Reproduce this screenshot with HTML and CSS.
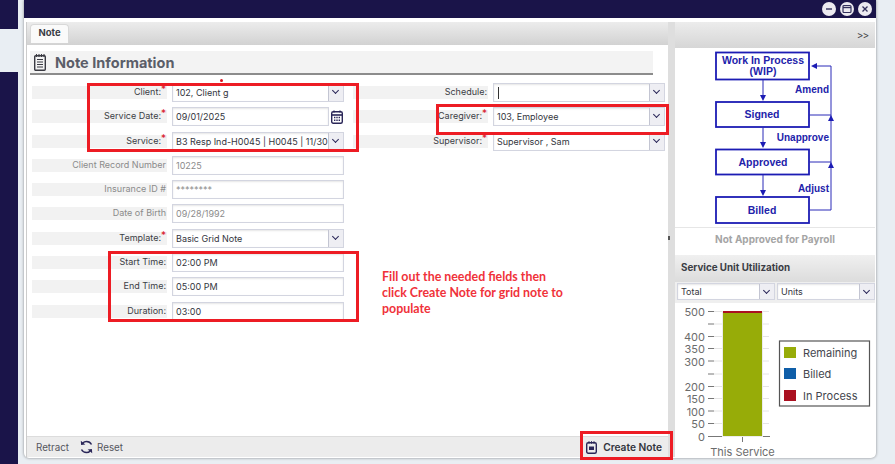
FILE: index.html
```html
<!DOCTYPE html>
<html lang="en">
<head>
    <meta charset="UTF-8">
    <title>Note Information</title>
    <link rel="stylesheet" href="styles.css">
</head>
<body>

<!-- Left nav strip behind the dialog -->
<div class="nav-strip">
    <div class="nav-dark nav-top"></div>
    <div class="nav-light"></div>
    <div class="nav-dark nav-rest"></div>
</div>

<div class="dialog">
    <div class="title-bar">
        <span class="win-btn"><svg width="10" height="10" viewBox="0 0 10 10"><path d="M2 5h6" stroke="#33305c" stroke-width="1.4"/></svg></span>
        <span class="win-btn"><svg width="10" height="10" viewBox="0 0 10 10"><rect x="1" y="1.5" width="8" height="7" rx="1" fill="none" stroke="#33305c" stroke-width="1.2"/><path d="M1 3.5h8" stroke="#33305c" stroke-width="1.4"/></svg></span>
        <span class="win-btn"><svg width="10" height="10" viewBox="0 0 10 10"><path d="M2.5 2.5l5 5M7.500 2.500l-5 5" stroke="#33305c" stroke-width="1.3"/></svg></span>
    </div>

    <div class="dialog-body">
        <div class="main-pane">
            <div class="tab-bar">
                <div class="tab">Note</div>
            </div>

            <div class="form-pane">
                <div class="section-head">
                    <svg class="section-icon" width="12" height="17" viewBox="0 0 12 17">
                        <rect x="0.7" y="1.700" width="10.600" height="14.600" rx="1" fill="none" stroke="#3a3a42" stroke-width="1.400"/>
                        <path d="M2.500 0v3M5 0v3M7.500 0v3M10 0v3M3 5.500h6M3 8h6M3 10.500h6M3 13h6" stroke="#3a3a42" stroke-width="1.100"/>
                    </svg>
                    <span class="section-title">Note Information</span>
                </div>
                <span class="stray-dot"></span>

                <div class="form-columns">
                    <div class="form-col">
                        <div class="form-row">
                            <div class="form-label">Client:<span class="req">*</span></div>
                            <div class="field select"><span class="value">102, Client g</span><span class="arrow"></span></div>
                        </div>
                        <div class="form-row">
                            <div class="form-label">Service Date:<span class="req">*</span></div>
                            <div class="date-wrap">
                                <div class="field"><span class="value">09/01/2025</span></div>
                                <svg class="cal-icon" width="12" height="14" viewBox="0 0 12 14">
                                    <rect x="0.700" y="1.700" width="10.600" height="11.600" rx="1.500" fill="none" stroke="#2a2658" stroke-width="1.400"/>
                                    <path d="M1 5h10" stroke="#2a2658" stroke-width="1.600"/>
                                    <path d="M3 0.500v2M9 0.500v2" stroke="#2a2658" stroke-width="1.300"/>
                                    <path d="M3 7.500h1.400M5.300 7.500h1.400M7.600 7.500h1.400M3 10.200h1.400M5.300 10.200h1.400M7.600 10.200h1.400" stroke="#2a2658" stroke-width="1.400"/>
                                </svg>
                            </div>
                        </div>
                        <div class="form-row">
                            <div class="form-label">Service:<span class="req">*</span></div>
                            <div class="field select"><span class="value">B3 Resp Ind-H0045 | H0045 | 11/30</span><span class="arrow"></span></div>
                        </div>
                        <div class="form-row muted">
                            <div class="form-label">Client Record Number</div>
                            <div class="field"><span class="value">10225</span></div>
                        </div>
                        <div class="form-row muted">
                            <div class="form-label">Insurance ID #</div>
                            <div class="field"><span class="value">********</span></div>
                        </div>
                        <div class="form-row muted">
                            <div class="form-label">Date of Birth</div>
                            <div class="field"><span class="value">09/28/1992</span></div>
                        </div>
                        <div class="form-row">
                            <div class="form-label">Template:<span class="req">*</span></div>
                            <div class="field select"><span class="value">Basic Grid Note</span><span class="arrow"></span></div>
                        </div>
                        <div class="form-row">
                            <div class="form-label">Start Time:</div>
                            <div class="field"><span class="value">02:00 PM</span></div>
                        </div>
                        <div class="form-row">
                            <div class="form-label">End Time:</div>
                            <div class="field"><span class="value">05:00 PM</span></div>
                        </div>
                        <div class="form-row">
                            <div class="form-label">Duration:</div>
                            <div class="field"><span class="value">03:00</span></div>
                        </div>
                    </div>

                    <div class="form-col">
                        <div class="form-row">
                            <div class="form-label">Schedule:</div>
                            <div class="field select"><span class="caret"></span><span class="arrow"></span></div>
                        </div>
                        <div class="form-row">
                            <div class="form-label">Caregiver:<span class="req">*</span></div>
                            <div class="field select"><span class="value">103, Employee</span><span class="arrow"></span></div>
                        </div>
                        <div class="form-row">
                            <div class="form-label">Supervisor:<span class="req">*</span></div>
                            <div class="field select"><span class="value">Supervisor , Sam</span><span class="arrow"></span></div>
                        </div>
                        <div class="annotation">Fill out the needed fields then click Create Note for grid note to populate</div>
                    </div>
                </div>
            </div>

            <div class="action-bar">
                <span class="action">Retract</span>
                <span class="action">
                    <svg width="13" height="14" viewBox="0 0 13 14">
                        <path d="M11.500 4.500C10.500 2.500 8.700 1.500 6.500 1.500c-1.500 0-2.800.6-3.700 1.600" fill="none" stroke="#2a2658" stroke-width="1.500"/>
                        <path d="M0.800 0.800l.3 4.300 4.200-.7z" fill="#2a2658"/>
                        <path d="M1.500 9.500c1 2 2.800 3 5 3 1.500 0 2.800-.6 3.700-1.600" fill="none" stroke="#2a2658" stroke-width="1.500"/>
                        <path d="M12.200 13.200l-.3-4.300-4.200.7z" fill="#2a2658"/>
                    </svg>
                    Reset
                </span>
                <span class="action action-primary">
                    <svg width="11" height="13" viewBox="0 0 11 13">
                        <rect x="0.700" y="1.700" width="9.600" height="10.600" rx="1.500" fill="none" stroke="#2a2658" stroke-width="1.400"/>
                        <path d="M3 0.200v2.500M5.500 0.200v2.500M8 0.200v2.500" stroke="#2a2658" stroke-width="1"/>
                        <rect x="3" y="5.500" width="5" height="3.500" fill="#2a2658"/>
                    </svg>
                    Create Note
                </span>
            </div>
        </div>

        <div class="gutter"><span class="gutter-dot"></span></div>

        <div class="side-pane">
            <div class="side-top"><span class="collapse">&gt;&gt;</span></div>
            <div class="workflow">
                <svg width="200" height="179" viewBox="675 48 200 179">
                    <g fill="none" stroke="#1c1cb4" stroke-width="1.800">
                        <rect x="716" y="52.500" width="93" height="27"/>
                        <rect x="716" y="102" width="93" height="25"/>
                        <rect x="716" y="149.500" width="93" height="25"/>
                        <rect x="716" y="197" width="93" height="26"/>
                    </g>
                    <g fill="none" stroke="#2a2ab8" stroke-width="1">
                        <path d="M763 80v17M763 127v15M763 175v15"/>
                        <path d="M809 210h22V66h-15M809 115h22M809 162h22"/>
                    </g>
                    <g fill="#1c1cb4">
                        <path d="M760 95h6l-3 6zM760 142h6l-3 6zM760 190h6l-3 6z"/>
                        <path d="M811 66l6-3v6zM828 121l3-6 3 6zM828 168l3-6 3 6z"/>
                    </g>
                    <g class="wf-text" text-anchor="middle">
                        <text x="763" y="63.500">Work In Process</text>
                        <text x="763" y="75">(WIP)</text>
                        <text x="762" y="118">Signed</text>
                        <text x="763" y="166">Approved</text>
                        <text x="762" y="214">Billed</text>
                    </g>
                    <g class="wf-text wf-side" text-anchor="end">
                        <text x="829" y="93">Amend</text>
                        <text x="829" y="141">Unapprove</text>
                        <text x="829" y="192">Adjust</text>
                    </g>
                </svg>
            </div>
            <div class="payroll-status">Not Approved for Payroll</div>

            <div class="side-head">Service Unit Utilization</div>
            <div class="side-filters">
                <div class="field select"><span class="value">Total</span><span class="arrow"></span></div>
                <div class="field select"><span class="value">Units</span><span class="arrow"></span></div>
            </div>
            <div class="chart">
                <svg width="200" height="156" viewBox="675 304 200 156">
                    <g stroke="#e4e4e4" stroke-width="1">
                        <path d="M714 312.500h55M714 325h55M714 337.500h55M714 349.500h55M714 362h55M714 375h55M714 387.500h55M714 399.500h55M714 412h55M714 424.500h55"/>
                    </g>
                    <g stroke="#777" stroke-width="1">
                        <path d="M708 312.500h6M708 325h6M708 337.500h6M708 349.500h6M708 362h6M708 375h6M708 387.500h6M708 399.500h6M708 412h6M708 424.500h6"/>
                        <path d="M708 437.500h62M742.500 437v6"/>
                    </g>
                    <rect x="722" y="312" width="41" height="126" fill="#ececec"/>
                    <rect x="723" y="314" width="39" height="123" fill="#97ac08"/>
                    <rect x="723" y="312" width="39" height="2" fill="#aa1020"/>
                    <g class="axis-text" text-anchor="end">
                        <text x="705" y="316.500">500</text>
                        <text x="705" y="341.500">400</text>
                        <text x="705" y="353.500">350</text>
                        <text x="705" y="366.500">300</text>
                        <text x="705" y="391.500">200</text>
                        <text x="705" y="403.500">150</text>
                        <text x="705" y="416.500">100</text>
                        <text x="705" y="428.500">50</text>
                        <text x="705" y="441.500">0</text>
                    </g>
                    <text class="axis-text" x="742.500" y="456.500" text-anchor="middle">This Service</text>
                    <rect x="779.500" y="342" width="90" height="65" fill="#fff" stroke="#555" stroke-width="1.200"/>
                    <rect x="784" y="348" width="12" height="11" fill="#97ac08"/>
                    <rect x="784" y="369" width="12" height="11" fill="#0f5ea8"/>
                    <rect x="784" y="391" width="12" height="11" fill="#aa1020"/>
                    <g class="legend-text">
                        <text x="803" y="357.500">Remaining</text>
                        <text x="803" y="379">Billed</text>
                        <text x="803" y="400.500">In Process</text>
                    </g>
                </svg>
            </div>
        </div>
    </div>
</div>

<!-- Red callouts drawn over the form -->
<div class="callout callout-left"></div>
<div class="callout callout-caregiver"></div>
<div class="callout callout-times"></div>
<div class="callout callout-create"></div>

</body>
</html>
```

FILE: styles.css
```css
/* Colors */
:root {
    --navy: #1a1449;
    --page: #e9eef3;
    --label-bg: #f2f2f2;
    --field-border: #d3d5e0;
    --text: #3b3d45;
    --muted: #8b8b8b;
    --callout: #ed1c24;
}

html, body {
    margin: 0;
    padding: 0;
}

body {
    width: 895px;
    height: 464px;
    overflow: hidden;
    position: relative;
    display: flex;
    background-color: var(--page);
    font-family: Inter, "Noto Sans", sans-serif;
    font-size: 9px;
    color: var(--text);
}

.nav-strip {
    width: 18px;
    display: flex;
    flex-direction: column;
    flex-shrink: 0;
}

.nav-dark {
    background-color: var(--navy);
}

.nav-top {
    height: 29px;
}

.nav-light {
    height: 43px;
    background-color: var(--page);
}

.nav-rest {
    flex: 1;
}

.dialog {
    margin-left: 6px;
    width: 852px;
    height: 458px;
    background-color: #fff;
    display: flex;
    flex-direction: column;
    border-radius: 0 0 5px 5px;
    box-shadow: 0 0 3px rgba(0, 0, 0, 0.45);
}

.title-bar {
    height: 18px;
    background-color: var(--navy);
    display: flex;
    justify-content: flex-end;
    align-items: center;
    gap: 4px;
    padding-right: 4px;
    flex-shrink: 0;
}

.win-btn {
    width: 14px;
    height: 14px;
    border-radius: 50%;
    background-color: #eceaf0;
    display: flex;
    align-items: center;
    justify-content: center;
}

.dialog-body {
    flex: 1;
    display: flex;
    padding: 4px 1px 1px 3px;
    min-height: 0;
}

.main-pane {
    width: 641px;
    display: flex;
    flex-direction: column;
    box-shadow: -1px 0 0 #ccc;
}

.tab-bar {
    height: 23px;
    padding: 2px 0 0 3px;
    box-sizing: border-box;
    background: linear-gradient(#ececec, #d2d2d2);
    flex-shrink: 0;
}

.tab {
    width: 39px;
    height: 19px;
    line-height: 16px;
    text-align: center;
    font-weight: 700;
    font-size: 9.5px;
    background-color: #fafafa;
    border: 1px solid #d8d8d8;
    border-bottom: none;
    border-radius: 4px 4px 0 0;
    box-sizing: border-box;
}

.form-pane {
    flex: 1;
    position: relative;
    padding: 6px 0 0 3px;
    min-height: 0;
}

.section-head {
    width: 623px;
    height: 24px;
    box-sizing: border-box;
    background-color: #f3f3f3;
    border-bottom: 2px solid #8c8c8c;
    display: flex;
    align-items: center;
    padding-left: 4px;
    gap: 9px;
}

.section-title {
    font-size: 14.5px;
    font-weight: 700;
    color: #5b5e69;
}

.stray-dot {
    position: absolute;
    left: 193px;
    top: 34px;
    width: 3px;
    height: 3px;
    border-radius: 50%;
    background-color: #d8101c;
}

.form-columns {
    display: flex;
    gap: 9px;
    padding: 8px 0 0 2px;
}

.form-col {
    width: 312px;
}

.form-row {
    height: 24.3px;
    display: flex;
    align-items: flex-start;
    gap: 5px;
}

.form-label {
    width: 135px;
    height: 13px;
    margin-top: 3px;
    line-height: 12px;
    padding-right: 1px;
    box-sizing: border-box;
    text-align: right;
    background-color: var(--label-bg);
    white-space: nowrap;
}

.req {
    color: #d8101c;
    font-size: 10px;
    line-height: 0;
    vertical-align: 2px;
}

.field {
    flex: 1;
    height: 19px;
    box-sizing: border-box;
    border: 1px solid var(--field-border);
    background-color: #fff;
    box-shadow: inset 0 1px 2px rgba(0, 0, 0, 0.1);
    display: flex;
    align-items: center;
    padding-left: 3px;
    color: #33353d;
    white-space: nowrap;
    overflow: hidden;
}

.value {
    flex: 1;
}

.muted .form-label,
.muted .field {
    color: var(--muted);
}

.arrow {
    width: 14px;
    height: 100%;
    flex-shrink: 0;
    background-color: #eeeef3;
    border-left: 1px solid #c3c5d2;
    position: relative;
}

.arrow::after {
    content: "";
    position: absolute;
    left: 4px;
    top: 4px;
    width: 4px;
    height: 4px;
    border-right: 1.5px solid #2a2658;
    border-bottom: 1.5px solid #2a2658;
    transform: rotate(45deg);
}

.caret {
    width: 1px;
    height: 12px;
    background-color: #333;
    margin-left: 1px;
    margin-right: auto;
}

.date-wrap {
    flex: 1;
    display: flex;
    align-items: center;
    gap: 2px;
}

.cal-icon {
    flex-shrink: 0;
    margin-right: 1px;
}

.annotation {
    width: 186px;
    margin: 113px 0 0 29px;
    font-family: Lato, sans-serif;
    font-size: 12.4px;
    font-weight: 700;
    line-height: 16.3px;
    color: #f0323a;
}

.action-bar {
    height: 21px;
    flex-shrink: 0;
    display: flex;
    align-items: center;
    gap: 11px;
    padding: 0 6px 0 9px;
    background-color: #ececec;
    border-top: 1px solid #dcdcdc;
    box-sizing: border-box;
    font-size: 9.8px;
    color: #55565e;
}

.action {
    display: flex;
    align-items: center;
    gap: 4px;
}

.action-primary {
    margin-left: auto;
    gap: 6px;
    font-size: 10.2px;
    font-weight: 600;
    color: #33353d;
}

.gutter {
    width: 7px;
    background-color: #dedede;
    position: relative;
}

.gutter-dot {
    position: absolute;
    left: 0;
    top: 214px;
    width: 2px;
    height: 4px;
    background-color: #555;
}

.side-pane {
    flex: 1;
    display: flex;
    flex-direction: column;
    min-width: 0;
}

.side-top {
    height: 26px;
    flex-shrink: 0;
    background: linear-gradient(#ececec, #d6d6d6);
    display: flex;
    align-items: center;
    justify-content: flex-end;
    padding-right: 7px;
    box-sizing: border-box;
}

.collapse {
    font-size: 10px;
    letter-spacing: -1px;
    color: #444;
}

.workflow {
    height: 179px;
    flex-shrink: 0;
    border-bottom: 1px solid #e6e6e6;
}

.workflow svg,
.chart svg {
    display: block;
}

.wf-text {
    font-family: "Liberation Sans", Arial, sans-serif;
    font-size: 10.5px;
    font-weight: 700;
    fill: #2222aa;
}

.wf-side {
    font-size: 10px;
}

.payroll-status {
    height: 27px;
    line-height: 22px;
    text-align: center;
    font-weight: 700;
    font-size: 10px;
    color: #a5a5a5;
    flex-shrink: 0;
}

.side-head {
    height: 27px;
    line-height: 26px;
    padding-left: 6px;
    font-size: 9.8px;
    font-weight: 700;
    background: linear-gradient(#f0f0f0, #dcdcdc);
    flex-shrink: 0;
}

.side-filters {
    display: flex;
    gap: 2px;
    padding: 1px 0 0 2px;
    height: 21px;
    box-sizing: border-box;
    background-color: #efefef;
    flex-shrink: 0;
}

.side-filters .field {
    height: 17px;
}

.chart {
    flex: 1;
    min-height: 0;
}

.axis-text {
    font-size: 11px;
    fill: #6b6b6b;
}

.legend-text {
    font-size: 11px;
    fill: #44464e;
}

/* Red callouts over the form */
.callout {
    position: absolute;
    box-sizing: border-box;
    border: 3px solid var(--callout);
}

.callout-left {
    left: 87px;
    top: 83px;
    width: 272px;
    height: 69px;
}

.callout-caregiver {
    left: 436px;
    top: 104px;
    width: 233px;
    height: 31px;
}

.callout-times {
    left: 108px;
    top: 251px;
    width: 251px;
    height: 71px;
}

.callout-create {
    left: 580px;
    top: 431px;
    width: 93px;
    height: 29px;
}
```
